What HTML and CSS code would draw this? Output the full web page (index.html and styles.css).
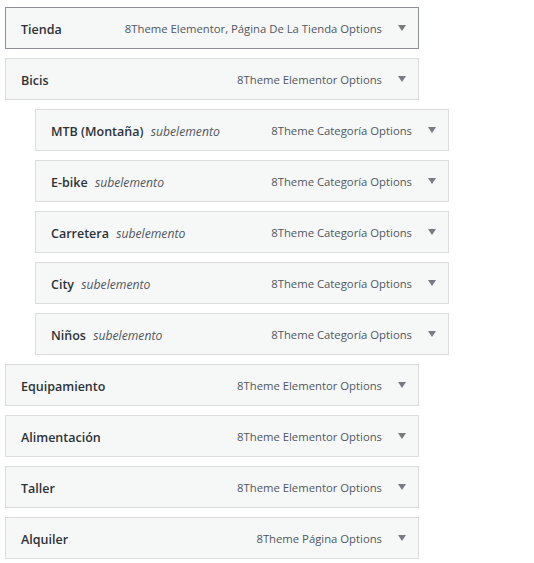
FILE: index.html
```html
<!DOCTYPE html>
<html lang="es">
<head>
<meta charset="utf-8">
<title>Menú</title>
<link rel="stylesheet" href="styles.css">
</head>
<body>
<ul class="menu">
  <li class="item depth-0 active">
    <div class="bar"><span class="title">Tienda</span><span class="controls"><span class="type">8Theme Elementor, Página De La Tienda Options</span><span class="arrow"></span></span></div>
  </li>
  <li class="item depth-0">
    <div class="bar"><span class="title">Bicis</span><span class="controls"><span class="type">8Theme Elementor Options</span><span class="arrow"></span></span></div>
  </li>
  <li class="item depth-1">
    <div class="bar"><span class="title">MTB (Montaña) <em class="sub">subelemento</em></span><span class="controls"><span class="type">8Theme Categoría Options</span><span class="arrow"></span></span></div>
  </li>
  <li class="item depth-1">
    <div class="bar"><span class="title">E-bike <em class="sub">subelemento</em></span><span class="controls"><span class="type">8Theme Categoría Options</span><span class="arrow"></span></span></div>
  </li>
  <li class="item depth-1">
    <div class="bar"><span class="title">Carretera <em class="sub">subelemento</em></span><span class="controls"><span class="type">8Theme Categoría Options</span><span class="arrow"></span></span></div>
  </li>
  <li class="item depth-1">
    <div class="bar"><span class="title">City <em class="sub">subelemento</em></span><span class="controls"><span class="type">8Theme Categoría Options</span><span class="arrow"></span></span></div>
  </li>
  <li class="item depth-1">
    <div class="bar"><span class="title">Niños <em class="sub">subelemento</em></span><span class="controls"><span class="type">8Theme Categoría Options</span><span class="arrow"></span></span></div>
  </li>
  <li class="item depth-0">
    <div class="bar"><span class="title">Equipamiento</span><span class="controls"><span class="type">8Theme Elementor Options</span><span class="arrow"></span></span></div>
  </li>
  <li class="item depth-0">
    <div class="bar"><span class="title">Alimentación</span><span class="controls"><span class="type">8Theme Elementor Options</span><span class="arrow"></span></span></div>
  </li>
  <li class="item depth-0">
    <div class="bar"><span class="title">Taller</span><span class="controls"><span class="type">8Theme Elementor Options</span><span class="arrow"></span></span></div>
  </li>
  <li class="item depth-0">
    <div class="bar"><span class="title">Alquiler</span><span class="controls"><span class="type">8Theme Página Options</span><span class="arrow"></span></span></div>
  </li>
</ul>
</body>
</html>
```
FILE: styles.css
```css
html, body {
  margin: 0;
  padding: 0;
  background: #ffffff;
}
body {
  font-family: "Open Sans", "Noto Sans", sans-serif;
  font-size: 13px;
  color: #1d2327;
}
.menu {
  list-style: none;
  margin: 0;
  padding: 7px 0 0 5px;
  display: flex;
  flex-direction: column;
  gap: 9px;
}
.item.depth-1 {
  padding-left: 30px;
}
.bar {
  box-sizing: border-box;
  width: 414px;
  height: 42px;
  border: 1px solid #dcdcde;
  background: #f6f7f7;
  display: flex;
  align-items: center;
  justify-content: space-between;
  padding: 1px 12px 0 15px;
}
.active .bar {
  border-color: #8c8f94;
}
.title {
  font-size: 12.5px;
  font-weight: 600;
  color: #2c3338;
  white-space: nowrap;
  padding-top: 1px;
}
.sub {
  font-size: 12.2px;
  font-weight: 400;
  font-style: italic;
  color: #50575e;
  margin-left: 4px;
}
.controls {
  display: flex;
  align-items: center;
  gap: 16px;
}
.type {
  font-size: 11.3px;
  color: #50575e;
  white-space: nowrap;
}
.arrow {
  width: 0;
  height: 0;
  border-left: 4px solid transparent;
  border-right: 4px solid transparent;
  border-top: 6px solid #787c82;
  margin-top: -1px;
}
```
